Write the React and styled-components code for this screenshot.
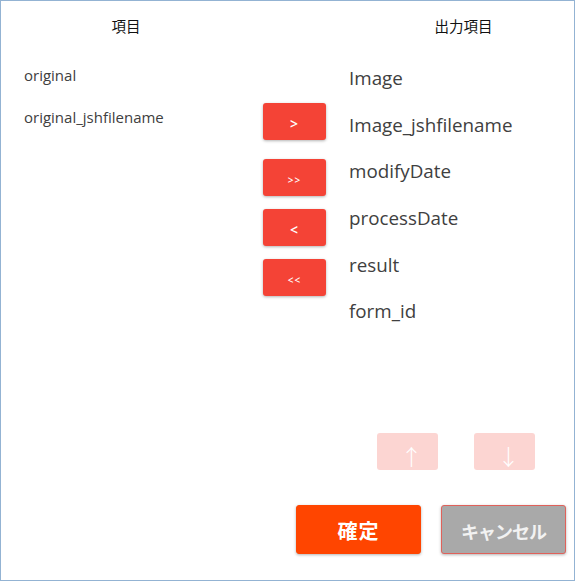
import React, { useState } from "react";
import styled, { createGlobalStyle } from "styled-components";

const GlobalStyle = createGlobalStyle`
  html, body {
    margin: 0;
    padding: 0;
    background: #fff;
  }
  body {
    font-family: "Open Sans", "Noto Sans CJK JP", sans-serif;
  }
`;

const Frame = styled.div`
  box-sizing: border-box;
  width: 575px;
  height: 581px;
  border: 1px solid #93b3d3;
  display: flex;
  flex-direction: column;
`;

const Columns = styled.div`
  display: grid;
  grid-template-columns: 250px 98px 1fr;
`;

const Heading = styled.div`
  height: 48px;
  display: flex;
  align-items: center;
  justify-content: center;
  padding-left: ${(p) => (p.$out ? "4px" : "0")};
  font-family: "Noto Sans CJK JP", sans-serif;
  font-weight: 400;
  font-size: 14.5px;
  color: #111;
`;

const Body = styled(Columns)`
  flex: 1;
`;

const LeftList = styled.ul`
  list-style: none;
  margin: 0;
  padding: 5px 0 0 23px;
`;

const LeftItem = styled.li`
  height: 42px;
  display: flex;
  align-items: center;
  font-size: 15px;
  color: #404040;
`;

const MoveButtons = styled.div`
  display: flex;
  flex-direction: column;
  gap: 13px;
  padding: 54px 0 0 12px;
`;

const MoveButton = styled.button`
  width: 63px;
  height: 37px;
  margin-bottom: ${(p) => (p.$extra ? "6px" : "0")};
  border: none;
  border-radius: 3px;
  background: #f44336;
  color: #fff;
  font-family: "Open Sans", sans-serif;
  font-weight: 600;
  font-size: ${(p) => (p.$double ? "10px" : "14px")};
  letter-spacing: 1px;
  padding-top: 5px;
  box-shadow: 0 1px 3px rgba(0, 0, 0, 0.3);
  cursor: pointer;
`;

const RightList = styled.ul`
  list-style: none;
  margin: 0;
  padding: 6px 0 0 0;
`;

const RightItem = styled.li`
  height: 46.6px;
  display: flex;
  align-items: center;
  font-size: 18.8px;
  color: #404040;
`;

const SortRow = styled.div`
  display: flex;
  justify-content: flex-end;
  gap: 36px;
  padding-right: 39px;
  margin-bottom: 35px;
`;

const SortButton = styled.button`
  width: 61px;
  height: 37px;
  border: none;
  border-radius: 3px;
  background: #f44336;
  opacity: 0.22;
  color: #fff;
  font-size: 22px;
  padding: 6px 0 0 8px;
  line-height: 1;
  font-family: "Noto Sans CJK JP", sans-serif;
  font-weight: 300;
`;

const Footer = styled.div`
  display: flex;
  justify-content: flex-end;
  gap: 20px;
  padding-right: 8px;
  margin-bottom: 26px;
`;

const ActionButton = styled.button`
  box-sizing: border-box;
  width: 125px;
  height: 49px;
  border-radius: 3px;
  border: 1px solid ${(p) => (p.$cancel ? "#e0615a" : "#ff4500")};
  background: ${(p) => (p.$cancel ? "#a9a9a9" : "#ff4500")};
  color: ${(p) => (p.$cancel ? "#f2f2f2" : "#fff")};
  font-family: "Noto Sans CJK JP", sans-serif;
  font-weight: 700;
  font-size: ${(p) => (p.$cancel ? "18px" : "20px")};
  letter-spacing: ${(p) => (p.$cancel ? "-1px" : "1px")};
  padding-top: 3px;
  box-shadow: 0 1px 3px rgba(0, 0, 0, 0.3);
  cursor: pointer;
`;

const sourceFields = ["original", "original_jshfilename"];
const outputFields = [
  "Image",
  "Image_jshfilename",
  "modifyDate",
  "processDate",
  "result",
  "form_id",
];

export default function App() {
  const [left] = useState(sourceFields);
  const [right] = useState(outputFields);

  return (
    <Frame>
      <GlobalStyle />
      <Columns>
        <Heading>項目</Heading>
        <div />
        <Heading $out>出力項目</Heading>
      </Columns>
      <Body>
        <LeftList>
          {left.map((f) => (
            <LeftItem key={f}>{f}</LeftItem>
          ))}
        </LeftList>
        <MoveButtons>
          <MoveButton $extra>&gt;</MoveButton>
          <MoveButton $double>&gt;&gt;</MoveButton>
          <MoveButton>&lt;</MoveButton>
          <MoveButton $double>&lt;&lt;</MoveButton>
        </MoveButtons>
        <RightList>
          {right.map((f) => (
            <RightItem key={f}>{f}</RightItem>
          ))}
        </RightList>
      </Body>
      <SortRow>
        <SortButton disabled>↑</SortButton>
        <SortButton disabled>↓</SortButton>
      </SortRow>
      <Footer>
        <ActionButton>確定</ActionButton>
        <ActionButton $cancel>キャンセル</ActionButton>
      </Footer>
    </Frame>
  );
}
